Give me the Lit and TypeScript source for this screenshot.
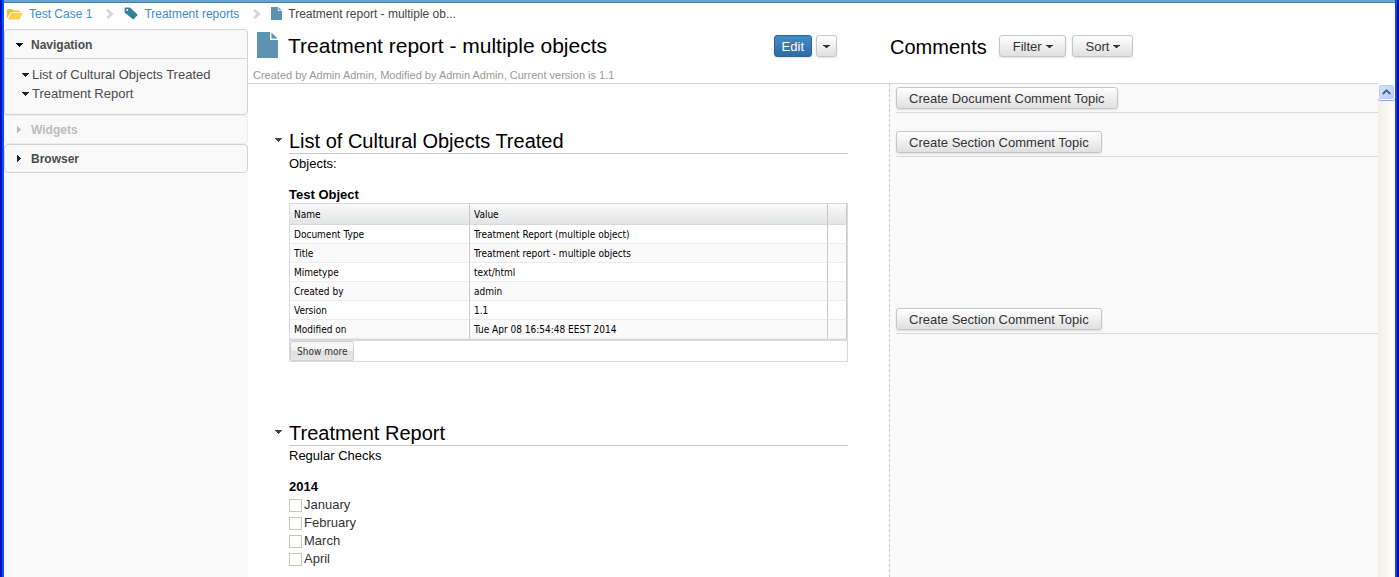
import { LitElement, html, css, svg } from "lit";
import { customElement, property } from "lit/decorators.js";

const caret = svg`<path d="M0 0H7V1H6V2H5V3H4V4H3V3H2V2H1V1H0Z" fill="currentColor"/>`;
const caretDown = html`<svg class="caret" width="7" height="4" viewBox="0 0 7 4" aria-hidden="true">${caret}</svg>`;
const caretSmall = html`<svg class="caret" width="7" height="3" viewBox="0 0 7 3" aria-hidden="true">
  <path d="M0 0H7V1H5.5V2H4.5V3H2.5V2H1.5V1H0Z" fill="currentColor" />
</svg>`;
const caretRight = html`<svg class="caret" width="4" height="7" viewBox="0 0 4 7" aria-hidden="true">
  <path d="M0 0H1V1H2V2H3V3H4V4H3V5H2V6H1V7H0Z" fill="currentColor" />
</svg>`;
const chevron = html`<svg class="chevron" width="8" height="10" viewBox="0 0 8 10" aria-hidden="true">
  <path d="M1 .8L5.6 5L1 9.2" fill="none" stroke="#d6d6d6" stroke-width="2.8" />
</svg>`;
const folderIcon = html`<svg width="16" height="12" viewBox="0 0 16 12" aria-hidden="true">
  <path d="M0 10.5V2Q0 1 1 1H5L6.5 2.4H12Q13 2.4 13 3.4V4H4.6L3.4 4.8Z" fill="#f3c035" />
  <path d="M4.2 4.8H15.6L12.6 11.4H.8Z" fill="#fcd04c" />
</svg>`;
const tagIcon = html`<svg width="14" height="13" viewBox="0 0 14 13" aria-hidden="true">
  <path fill-rule="evenodd" fill="#31809c" d="M.6 1.6Q.6.6 1.6.6H6L13.2 7.2Q13.8 7.8 13.2 8.4L9.8 12Q9.2 12.6 8.6 12L.6 5.6ZM3.2 1.9A1 1 0 1 0 3.2 3.9A1 1 0 1 0 3.2 1.9Z" />
</svg>`;
const pageIcon = (w: number, h: number) => html`<svg width=${w} height=${h} viewBox="0 0 21 26" preserveAspectRatio="none" aria-hidden="true">
  <path d="M0 0H13V8H21V26H0Z" fill="#5b93b1" />
  <path d="M14.4 .6L20.6 6.6H14.4Z" fill="#5b93b1" />
</svg>`;

const base = css`
  * { box-sizing: border-box; }
  button { font: inherit; margin: 0; }
  svg { display: block; flex: none; }
  .btn {
    display: inline-flex;
    align-items: center;
    justify-content: center;
    gap: 4px;
    height: 22px;
    padding: 1px 12px 0;
    font-size: 13px;
    line-height: 16px;
    color: #333;
    border: 1px solid #c6c6c6;
    border-radius: 3px;
    background: linear-gradient(#fff, #e0e0e0);
    box-shadow: 0 1px 2px rgba(0, 0, 0, 0.12);
    white-space: nowrap;
  }
`;

@customElement("side-nav")
export class SideNav extends LitElement {
  static styles = [base, css`
    :host { display: block; background: #f9f9f9; }
    .panel { border: 1px solid #d3d3d3; border-radius: 4px; }
    .panel.open { border-radius: 4px 4px 4px 0; }
    .head {
      display: flex;
      align-items: center;
      width: 100%;
      height: 27px;
      padding: 0 12px;
      gap: 10px;
      border: 0;
      background: none;
      font-size: 12px;
      font-weight: bold;
      color: #4c4c4c;
    }
    .open .head { height: 29px; padding-top: 2px; border-bottom: 1px solid #d3d3d3; }
    .head .caret { color: #222; }
    .open .head .caret { color: #000; }
    .mark { display: flex; justify-content: center; width: 4px; overflow: visible; }
    .off { border-color: #ececec; }
    .off .head, .off .head .caret { color: #bdbdbd; }
    ul { list-style: none; margin: 0; padding: 6px 0 11px 17px; }
    li a {
      display: flex;
      align-items: center;
      gap: 3px;
      height: 19px;
      color: #4c4c4c;
      font-size: 13px;
      text-decoration: none;
    }
    li .caret { color: #222; }
  `];
  render() {
    return html`
      <section class="panel open">
        <button class="head"><span class="mark">${caretDown}</span>Navigation</button>
        <ul>
          <li><a href="#list">${caretDown}List of Cultural Objects Treated</a></li>
          <li><a href="#report">${caretDown}Treatment Report</a></li>
        </ul>
      </section>
      <section class="panel off">
        <button class="head" disabled><span class="mark">${caretRight}</span>Widgets</button>
      </section>
      <section class="panel">
        <button class="head"><span class="mark">${caretRight}</span>Browser</button>
      </section>`;
  }
}

@customElement("property-table")
export class PropertyTable extends LitElement {
  @property({ attribute: false }) rows: [string, string][] = [];
  static styles = [base, css`
    :host {
      display: block;
      border: 1px solid #dadada;
      font-family: "DejaVu Sans Condensed", "DejaVu Sans", sans-serif;
      font-size: 10px;
      line-height: 12px;
      color: #000;
    }
    table { width: 100%; border-collapse: separate; border-spacing: 0; table-layout: fixed; }
    .name { width: 180px; }
    .extra { width: 19px; }
    th, td { padding: 2px 4px 0; text-align: left; font-weight: normal; border-right: 1px solid #c8c8c8; }
    th { height: 21px; background: linear-gradient(#f9f9f9, #e3e4e5); border-bottom: 1px solid #dadada; }
    td { height: 19px; border-bottom: 1px solid #ececec; }
    tr:nth-child(even) td { background: #fafafa; }
    .foot { border-top: 2px solid #dadada; }
    .more {
      display: block;
      height: 20px;
      padding: 1px 6px 0;
      color: #333;
      border: 1px solid #d0d0d0;
      border-radius: 2px;
      background: linear-gradient(#fafafa, #f0f0f0 50%, #dfdfdf 50%, #e6e6e6);
    }
  `];
  render() {
    return html`
      <table>
        <colgroup><col class="name" /><col /><col class="extra" /></colgroup>
        <thead><tr><th>Name</th><th>Value</th><th></th></tr></thead>
        <tbody>${this.rows.map(([k, v]) => html`<tr><td>${k}</td><td>${v}</td><td></td></tr>`)}</tbody>
      </table>
      <div class="foot"><button class="more">Show more</button></div>`;
  }
}

@customElement("app-root")
export class AppRoot extends LitElement {
  static styles = [base, css`
    :host {
      display: block;
      font-family: "Liberation Sans", Arial, sans-serif;
      font-size: 13px;
      line-height: 18px;
      color: #000;
    }
    .window {
      display: flex;
      flex-direction: column;
      min-height: 100vh;
      padding: 0 4px;
      background:
        linear-gradient(90deg, #0010c8 0 2px, #0a50ee 2px 4px) left / 4px 100% no-repeat,
        linear-gradient(90deg, #0a45e6 0 2px, #00109c 2px 4px) right / 4px 100% no-repeat,
        #fff;
    }
    .crumbs {
      display: flex;
      align-items: center;
      height: 29px;
      padding: 0 3px 5px;
      border-top: 3px solid #4c8ebd;
      border-image: linear-gradient(#6ba3cf 0 2px, #3f80b0 2px) 3 0 0;
      font-size: 12px;
      color: #444;
    }
    .crumbs a, .crumbs span { display: flex; align-items: center; gap: 6px; color: #428bca; text-decoration: none; }
    .crumbs span { color: #444; }
    .chevron { margin: 0 10px 0 14px; }
    .layout { display: grid; flex: 1; grid-template-columns: 244px minmax(0, 641px) minmax(0, 1fr); grid-template-rows: 55px 1fr; }
    .nav { grid-row: 1 / 3; }
    .bar { display: flex; flex-direction: column; justify-content: space-between; border-bottom: 1px solid #d3d3d3; padding: 2px 0 0 5px; margin: 0; }
    .titles { display: flex; align-items: center; gap: 10px; height: 28px; padding-left: 4px; }
    h1, h2 { margin: 0; font-size: 20px; font-weight: normal; line-height: 25px; }
    h1 { font-size: 21px; }
    .actions { display: flex; gap: 4px; margin: 2px 0 0 auto; padding-right: 52px; }
    .edit { padding: 1px 7px 0; color: #fff; border-color: #2a6496; background: linear-gradient(#428bca, #2d6ca2); }
    .drop { padding: 0 6px; }
    .meta { font-size: 11px; line-height: 16px; color: #999; }
    .cbar { flex-direction: row; justify-content: flex-start; gap: 6px; padding: 4px 0 0 1px; margin-right: 17px; }
    .cbar h2 { line-height: 28px; margin-right: 6px; }
    .cbar .btn { margin-top: 2px; padding-left: 13px; }
    .content { padding: 44px 41px 0; }
    .section-title { position: relative; border-bottom: 1px solid #c8c8c8; padding-top: 1px; line-height: 24px; }
    .section-title h2 { line-height: 24px; }
    .toggle { position: absolute; left: -14px; top: 8px; padding: 2px 0; border: 0; background: none; color: #444; }
    p, h3 { margin: 0; font-size: 13px; line-height: 20px; }
    .group { margin-top: 12px; }
    .group h3 { line-height: 17px; }
    .report { margin-top: 58px; }
    .months { display: flex; flex-direction: column; }
    .months label { display: flex; align-items: center; gap: 2px; height: 18px; padding-top: 2px; color: #333; }
    .months input { appearance: none; width: 13px; height: 13px; margin: 0; border: 1px solid #c9c7ba; background: #fff; }
    .comments { display: flex; border-left: 1px dashed #ccc; background: #f9f9f9; }
    .topics { flex: 1; padding: 3px 0 0 6px; }
    .topic { border-bottom: 1px solid #dadada; height: 26px; }
    .topic + .topic { margin-top: 18px; }
    .topic + .topic.later { margin-top: 151px; }
    .scroll { width: 17px; background: linear-gradient(90deg, #f1efe8, #fefefb); }
    .up {
      display: flex;
      align-items: center;
      justify-content: center;
      width: 17px;
      height: 16px;
      padding: 0;
      border: 1px solid #fff;
      border-radius: 3px;
      background: linear-gradient(135deg, #dbe5fe, #b5cbfa);
      box-shadow: inset 0 0 0 1px #b9cbf3, 0 1px 0 #8ea9d6;
    }
  `];

  private rows: [string, string][] = [
    ["Document Type", "Treatment Report (multiple object)"],
    ["Title", "Treatment report - multiple objects"],
    ["Mimetype", "text/html"],
    ["Created by", "admin"],
    ["Version", "1.1"],
    ["Modified on", "Tue Apr 08 16:54:48 EEST 2014"],
  ];

  render() {
    return html`
      <div class="window">
        <nav class="crumbs" aria-label="Breadcrumb">
          <a href="#case">${folderIcon}Test Case 1</a>${chevron}
          <a href="#reports">${tagIcon}Treatment reports</a>${chevron}
          <span>${pageIcon(11, 13)}Treatment report - multiple ob...</span>
        </nav>
        <div class="layout">
          <side-nav class="nav"></side-nav>
          <header class="bar">
            <div class="titles">
              ${pageIcon(21, 26)}
              <h1>Treatment report - multiple objects</h1>
              <div class="actions">
                <button class="btn edit">Edit</button>
                <button class="btn drop" aria-label="More actions">${caretSmall}</button>
              </div>
            </div>
            <div class="meta">Created by Admin Admin, Modified by Admin Admin, Current version is 1.1</div>
          </header>
          <header class="bar cbar">
            <h2>Comments</h2>
            <button class="btn">Filter ${caretSmall}</button>
            <button class="btn">Sort ${caretSmall}</button>
          </header>
          <main class="content">
            <section id="list">
              <div class="section-title">
                <button class="toggle" aria-label="Collapse section">${caretDown}</button>
                <h2>List of Cultural Objects Treated</h2>
              </div>
              <p>Objects:</p>
              <div class="group">
                <h3>Test Object</h3>
                <property-table .rows=${this.rows}></property-table>
              </div>
            </section>
            <section id="report" class="report">
              <div class="section-title">
                <button class="toggle" aria-label="Collapse section">${caretDown}</button>
                <h2>Treatment Report</h2>
              </div>
              <p>Regular Checks</p>
              <div class="group">
                <h3>2014</h3>
                <div class="months">
                  ${["January", "February", "March", "April"].map(
                    (m) => html`<label><input type="checkbox" />${m}</label>`
                  )}
                </div>
              </div>
            </section>
          </main>
          <aside class="comments">
            <div class="topics">
              <div class="topic"><button class="btn">Create Document Comment Topic</button></div>
              <div class="topic"><button class="btn">Create Section Comment Topic</button></div>
              <div class="topic later"><button class="btn">Create Section Comment Topic</button></div>
            </div>
            <div class="scroll">
              <button class="up" aria-label="Scroll up">
                <svg width="9" height="6" viewBox="0 0 9 6"><path d="M.8 5L4.5 1.4L8.2 5" fill="none" stroke="#4d6185" stroke-width="2" /></svg>
              </button>
            </div>
          </aside>
        </div>
      </div>`;
  }
}
